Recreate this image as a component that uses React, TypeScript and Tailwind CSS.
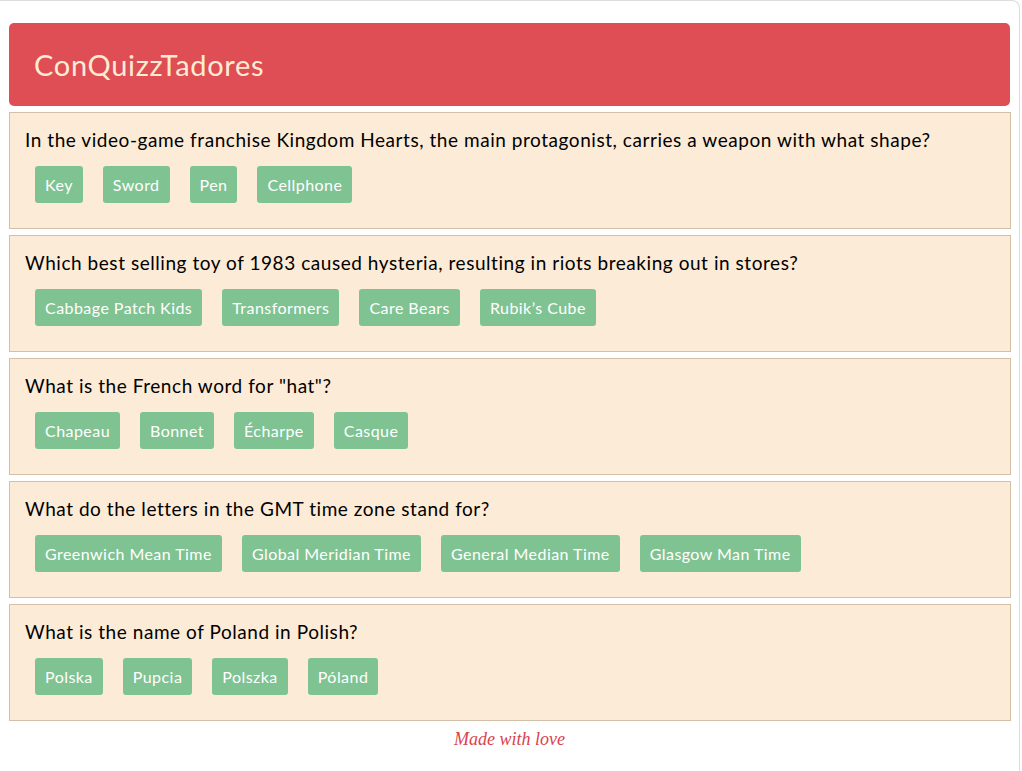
const quiz = [
  {
    question:
      "In the video-game franchise Kingdom Hearts, the main protagonist, carries a weapon with what shape?",
    answers: ["Key", "Sword", "Pen", "Cellphone"],
  },
  {
    question:
      "Which best selling toy of 1983 caused hysteria, resulting in riots breaking out in stores?",
    answers: ["Cabbage Patch Kids", "Transformers", "Care Bears", "Rubik\u2019s Cube"],
  },
  {
    question: 'What is the French word for "hat"?',
    answers: ["Chapeau", "Bonnet", "\u00c9charpe", "Casque"],
  },
  {
    question: "What do the letters in the GMT time zone stand for?",
    answers: ["Greenwich Mean Time", "Global Meridian Time", "General Median Time", "Glasgow Man Time"],
  },
  {
    question: "What is the name of Poland in Polish?",
    answers: ["Polska", "Pupcia", "Polszka", "P\u00f3land"],
  },
];

const QuestionCard = ({ question, answers }: { question: string; answers: string[] }) => {
  return (
    <div className="bg-[#fcebd6] border border-[#d2c0a9] px-[15px] pt-[13px] pb-[25px]">
      <h2 className="text-[19px] leading-[28px] tracking-[0.55px] text-black">{question}</h2>
      <div className="flex gap-[20px] pl-[10px] mt-[12px]">
        {answers.map((a) => (
          <button
            key={a}
            className="bg-[#7fc392] text-white text-[16px] tracking-[0.45px] h-[37px] px-[10px] rounded-[3px]"
          >
            {a}
          </button>
        ))}
      </div>
    </div>
  );
};

const App = () => {
  return (
    <div className="min-h-screen bg-white" style={{ fontFamily: "Lato, 'Open Sans', sans-serif" }}>
      <div className="w-[1020px] min-h-screen border-r border-t border-[#dcdcdc] rounded-tr-[8px] pt-[22px] px-[9px]">
        <header className="bg-[#df4d55] rounded-[5px] h-[83px] flex items-center px-[25px]">
          <h1 className="text-[29px] tracking-[0.7px] text-[#fdecd3]">ConQuizzTadores</h1>
        </header>

        <main className="flex flex-col gap-[6px] mt-[6px] w-[1002px]">
          {quiz.map((q) => (
            <QuestionCard key={q.question} question={q.question} answers={q.answers} />
          ))}
        </main>

        <footer className="text-center mt-[5px]">
          <span
            className="text-[18px] italic text-[#d9434e]"
            style={{ fontFamily: "'Liberation Serif', serif" }}
          >
            Made with love
          </span>
        </footer>
      </div>
    </div>
  );
};

export default App;
